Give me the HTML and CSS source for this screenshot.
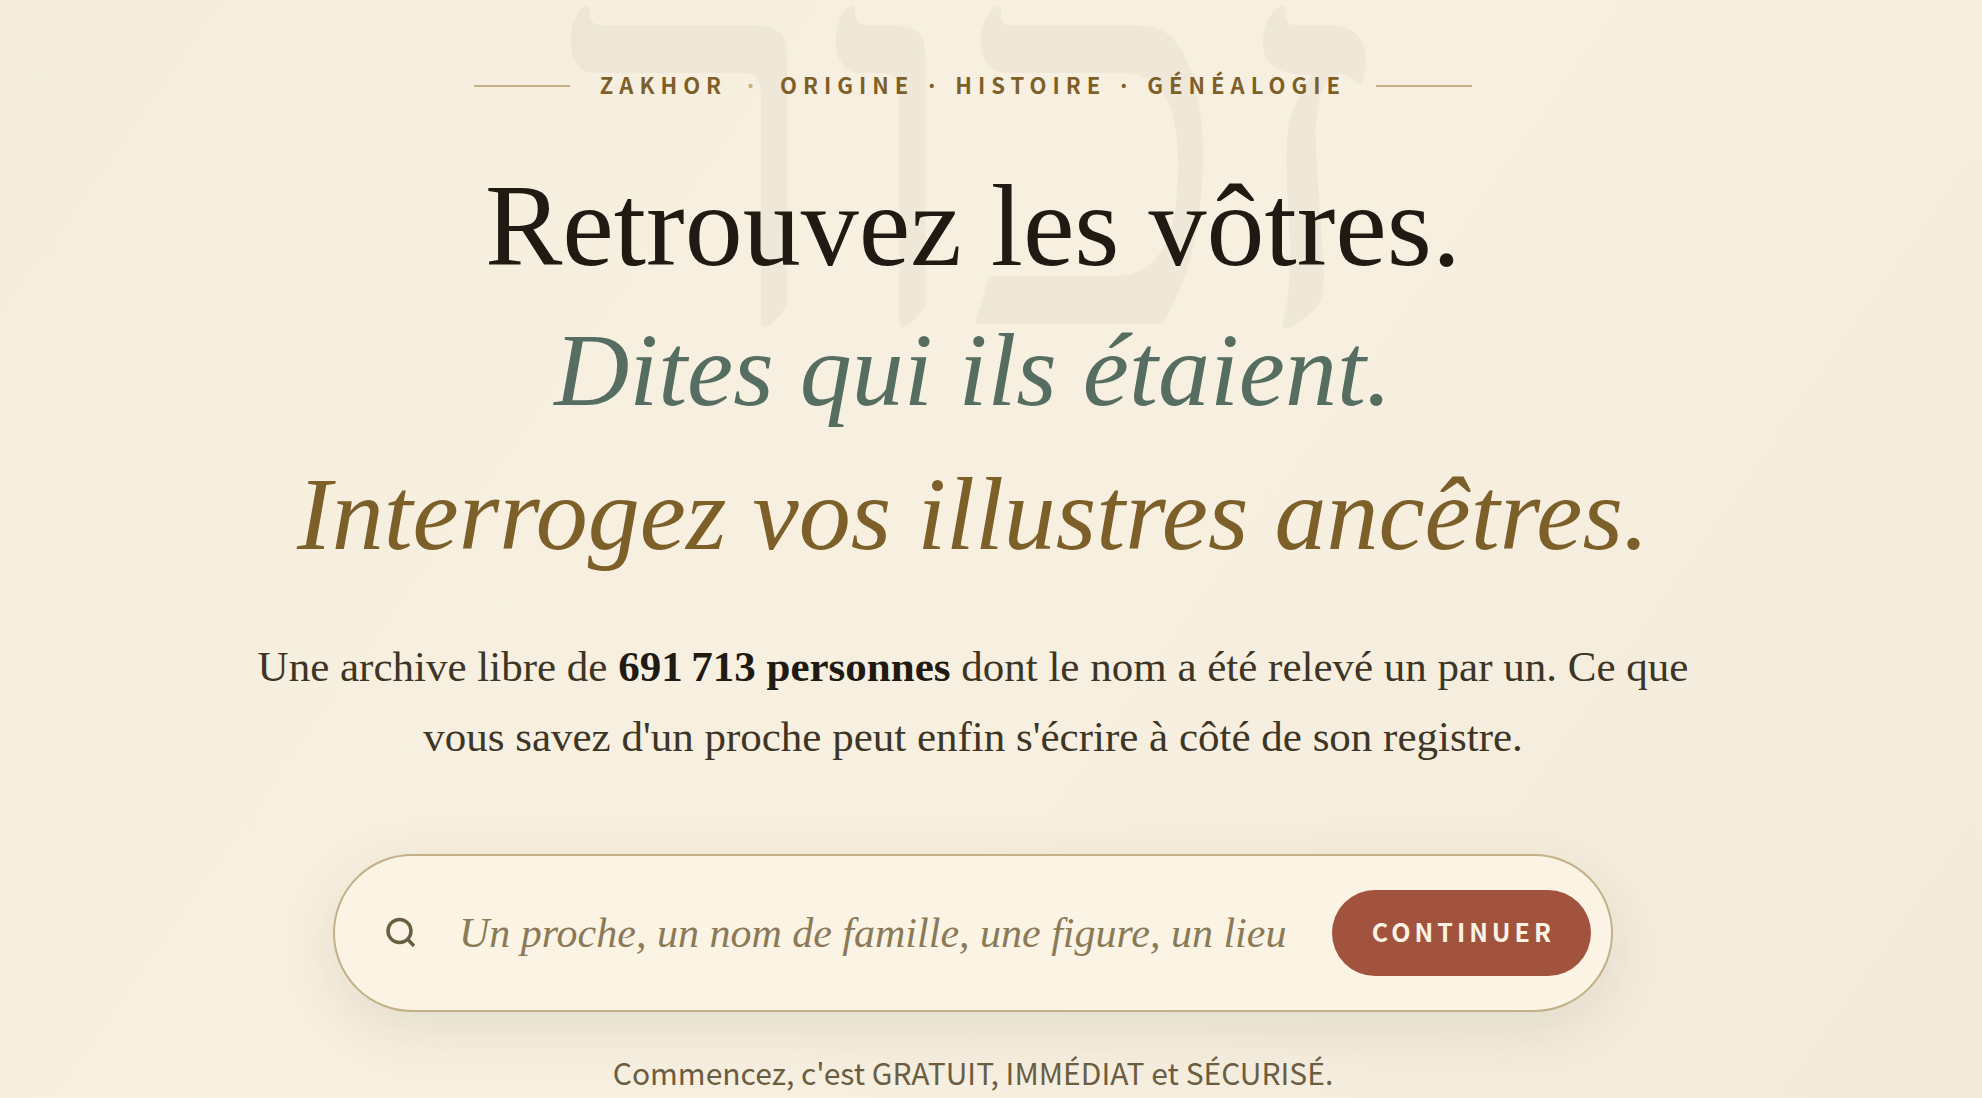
FILE: index.html
```html
<!DOCTYPE html>
<html lang="fr">
<head>
<meta charset="utf-8">
<meta name="viewport" content="width=device-width, initial-scale=1">
<title>Zakhor</title>
<link rel="stylesheet" href="styles.css">
</head>
<body>
<main class="hero">
  <div class="watermark" lang="he" dir="rtl" aria-hidden="true">זכור</div>
  <p class="eyebrow"><span class="eyebrow-text">ZAKHOR <span class="dot">·</span> ORIGINE · HISTOIRE · GÉNÉALOGIE</span></p>
  <h1 class="title">Retrouvez les vôtres.
    <em class="green">Dites qui ils étaient.</em>
    <em class="gold">Interrogez vos illustres ancêtres.</em>
  </h1>
  <p class="lead">Une archive libre de <strong>691&#8239;713 personnes</strong> dont le nom a été relevé un par un. Ce que vous savez d'un proche peut enfin s'écrire à côté de son registre.</p>
  <form class="search">
    <svg class="icon" viewBox="0 0 32 32" aria-hidden="true"><circle cx="16.500" cy="14" r="11.500"/><path d="M24.500 22l6.500 7"/></svg>
    <input class="field" type="text" aria-label="Recherche" placeholder="Un proche, un nom de famille, une figure, un lieu">
    <button class="submit" type="submit">CONTINUER</button>
  </form>
  <p class="note">Commencez, c'est GRATUIT, IMMÉDIAT et SÉCURISÉ.</p>
</main>
</body>
</html>
```
FILE: styles.css
```css
* { box-sizing: border-box; }

body {
  margin: 0;
  background: linear-gradient(125deg, #f4eddc 0%, #f7f0e0 35%, #f7f0e0 55%, #f2ebdb 100%);
  color: #1f1a12;
  font-family: "Liberation Serif", "Times New Roman", serif;
}

.hero {
  position: relative;
  display: flex;
  flex-direction: column;
  align-items: center;
  min-height: 100vh;
  padding: 66px 36px 0 0;
  overflow: hidden;
  text-align: center;
}

.hero > * { position: relative; }

.hero > .watermark {
  position: absolute;
  top: -158px;
  left: 0;
  right: 36px;
  font-size: 540px;
  line-height: 600px;
  color: #1f1a12;
  opacity: 0.03;
  white-space: nowrap;
}

.eyebrow {
  display: flex;
  align-items: center;
  gap: 30px;
  margin: 0;
  color: #7d6029;
  font-family: "Noto Sans CJK JP", "Open Sans", sans-serif;
  font-size: 22px;
  font-weight: 700;
  line-height: 36px;
  letter-spacing: 6px;
}

.eyebrow-text { padding-bottom: 4px; }

.eyebrow::before,
.eyebrow::after {
  content: "";
  width: 96px;
  height: 2px;
  background: #c4b088;
}

.dot {
  margin: 0 6px;
  color: #c4b088;
}

.title {
  margin: 48px 0 0;
  font-size: 116px;
  font-weight: 400;
  line-height: 144px;
}

.title em {
  display: block;
  font-size: 104px;
}

.green { color: #566e61; }
.gold { color: #7d6029; }

.lead {
  max-width: 1480px;
  margin: 46px 0 0;
  color: #3d3525;
  font-size: 43px;
  line-height: 70px;
}

.lead strong {
  color: #1f1a12;
  font-weight: 700;
}

.search {
  display: flex;
  align-items: center;
  width: calc(100% - 80px);
  max-width: 1280px;
  height: 158px;
  margin: 82px 0 0;
  padding: 0 20px 0 48px;
  border: 2px solid #c4b088;
  border-radius: 80px;
  background: #fbf4e5;
  box-shadow: 0 16px 60px rgba(60, 50, 30, 0.1);
}

.icon {
  flex: none;
  width: 32px;
  height: 32px;
  fill: none;
  stroke: #6b5d42;
  stroke-width: 3.5;
}

.field {
  flex: 1;
  min-width: 0;
  margin: 0 40px 0 44px;
  padding: 0;
  border: 0;
  outline: 0;
  background: none;
  color: #1f1a12;
  font: italic 42px/60px "Liberation Serif", "Times New Roman", serif;
}

.field::placeholder {
  color: #8a7a58;
  opacity: 1;
}

.submit {
  flex: none;
  height: 86px;
  padding: 0 36px 4px 40px;
  border: 0;
  border-radius: 43px;
  background: #a2533e;
  color: #fbf4e5;
  font-family: "Noto Sans CJK JP", "Open Sans", sans-serif;
  font-size: 25px;
  font-weight: 700;
  letter-spacing: 4px;
}

.note {
  margin: 36px 0 0;
  color: #6b5d42;
  font-family: "Noto Sans CJK JP", "Open Sans", sans-serif;
  font-size: 30px;
  line-height: 48px;
}
```
